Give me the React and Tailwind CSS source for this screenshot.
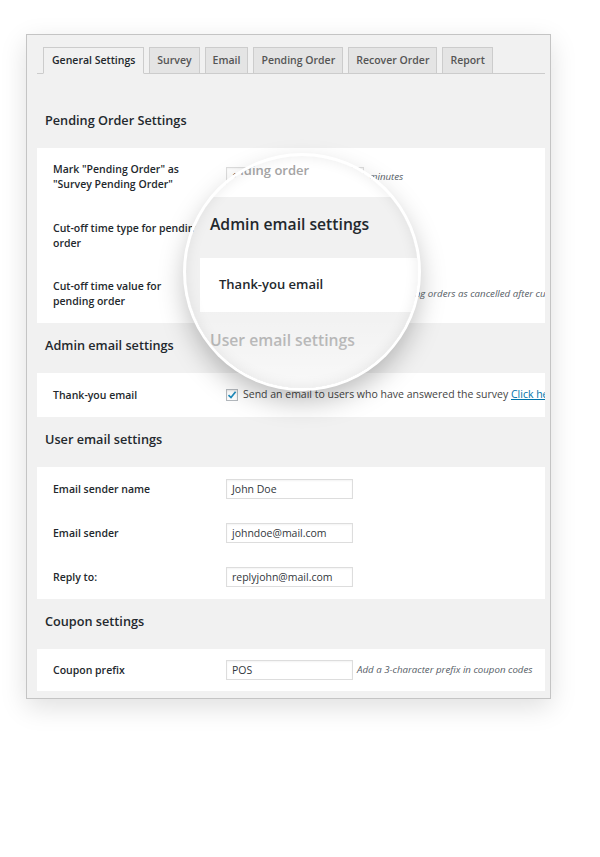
import React from "react";

const FONT = "font-['Open_Sans','Liberation_Sans',sans-serif]";

const tabs = ["General Settings", "Survey", "Email", "Pending Order", "Recover Order", "Report"];

function Heading({ children }) {
  return (
    <div className="h-[50px] pt-[12px] pl-[8px] text-[12.7px] leading-[20px] font-semibold text-[#23282d]">
      {children}
    </div>
  );
}

function Input({ value, w = "w-[127px]" }) {
  return (
    <div
      className={`${w} h-[20px] shrink-0 border border-[#dddddd] bg-white pl-[5px] text-[10.5px] leading-[18px] text-[#32373c] shadow-[inset_0_1px_2px_rgba(0,0,0,0.05)]`}
    >
      {value}
    </div>
  );
}

function Row({ h, label, children }) {
  return (
    <div className={`flex items-center ${h}`}>
      <div className="w-[189px] shrink-0 pl-[16px] text-[10.5px] leading-[15px] font-semibold text-[#23282d] whitespace-nowrap">
        {label}
      </div>
      <div className="flex items-center min-w-0 whitespace-nowrap">{children}</div>
    </div>
  );
}

function Desc({ children, ml = "ml-[4px]" }) {
  return <span className={`${ml} text-[9.7px] italic text-[#555d66]`}>{children}</span>;
}

function Section({ children }) {
  return <div className="bg-white overflow-hidden">{children}</div>;
}

function Check() {
  return (
    <div className="w-[12px] h-[12px] shrink-0 border border-[#b4b9be] bg-white flex items-center justify-center shadow-[inset_0_1px_2px_rgba(0,0,0,0.1)]">
      <svg width="10" height="10" viewBox="0 0 10 10">
        <path d="M1.5 5.2 L4 7.6 L8.6 1.8" fill="none" stroke="#1e8cbe" strokeWidth="1.7" />
      </svg>
    </div>
  );
}

function Magnifier() {
  return (
    <div className="absolute left-[186px] top-[156px] w-[232px] h-[232px] rounded-full overflow-hidden shadow-[0_0_0_3px_#ffffff,0_12px_28px_rgba(0,0,0,0.28)]">
      <div className="flex flex-col h-full">
        <div className="h-[41px] shrink-0 bg-white pl-[34px] pt-[5px] text-[13px] leading-[18px] font-semibold text-[#a4a4a4] whitespace-nowrap">
          pending order
        </div>
        <div className="h-[61px] shrink-0 bg-[#f1f1f1] pl-[24px] pt-[16px] text-[15.7px] leading-[22px] font-semibold text-[#23282d] whitespace-nowrap">
          Admin email settings
        </div>
        <div className="h-[54px] shrink-0 bg-[#f1f1f1] pl-[14px]">
          <div className="h-full bg-white pl-[19px] flex items-center text-[13px] font-semibold text-[#23282d] whitespace-nowrap">
            Thank-you email
          </div>
        </div>
        <div className="flex-1 bg-[#f1f1f1] pl-[24px] pt-[17px] text-[15.7px] leading-[22px] font-semibold text-[#a3a3a3] whitespace-nowrap">
          User email settings
        </div>
      </div>
      <div className="absolute inset-0 rounded-full bg-[linear-gradient(to_bottom,rgba(255,255,255,0)_65%,rgba(255,255,255,0.55)_100%)] shadow-[inset_0_0_14px_rgba(0,0,0,0.08)]" />
    </div>
  );
}

export default function App() {
  return (
    <div className={`relative w-[600px] h-[857px] bg-white ${FONT}`}>
      <div className="pt-[34px] pl-[26px]">
        <div className="w-[525px] h-[665px] border border-[#c4c4c4] bg-[#f1f1f1] shadow-[0_8px_25px_rgba(0,0,0,0.13)] pt-[12px] pl-[10px] pr-[5px]">
          <div className="flex gap-[5px] pl-[6px] h-[27px] border-b border-[#cccccc]">
            {tabs.map((t, i) => (
              <div
                key={t}
                className={
                  i === 0
                    ? "h-[27px] px-[8px] flex items-center border border-[#cccccc] border-b-[#f1f1f1] bg-[#f1f1f1] text-[10.5px] font-semibold text-[#23282d] whitespace-nowrap"
                    : "h-[27px] px-[7px] flex items-center border border-[#cccccc] bg-[#e4e4e4] text-[10.5px] font-semibold text-[#555555] whitespace-nowrap"
                }
              >
                {t}
              </div>
            ))}
          </div>

          <div className="mt-[24px]">
            <Heading>Pending Order Settings</Heading>
            <Section>
              <Row
                h="h-[58px]"
                label={
                  <>
                    Mark "Pending Order" as
                    <br />
                    "Survey Pending Order"
                  </>
                }
              >
                <Input value="1" w="w-[138px]" />
                <Desc ml="ml-[5px]">minutes</Desc>
              </Row>
              <Row
                h="h-[59px]"
                label={
                  <>
                    Cut-off time type for pending
                    <br />
                    order
                  </>
                }
              >
                <div className="w-[140px] h-[22px] border border-[#dddddd] bg-white pl-[5px] text-[10.5px] leading-[20px] text-[#32373c]">
                  Minutes
                </div>
              </Row>
              <Row
                h="h-[58px]"
                label={
                  <>
                    Cut-off time value for
                    <br />
                    pending order
                  </>
                }
              >
                <Input value="60" w="w-[136px]" />
                <Desc>Mark pending orders as cancelled after cut-off time</Desc>
              </Row>
            </Section>

            <Heading>Admin email settings</Heading>
            <Section>
              <Row h="h-[44px]" label="Thank-you email">
                <Check />
                <span className="ml-[5px] text-[10.5px] text-[#444444]">
                  Send an email to users who have answered the survey{" "}
                  <span className="text-[#0073aa] underline">Click here</span>
                </span>
              </Row>
            </Section>

            <Heading>User email settings</Heading>
            <Section>
              <Row h="h-[44px]" label="Email sender name">
                <Input value="John Doe" />
              </Row>
              <Row h="h-[44px]" label="Email sender">
                <Input value="johndoe@mail.com" />
              </Row>
              <Row h="h-[44px]" label="Reply to:">
                <Input value="replyjohn@mail.com" />
              </Row>
            </Section>

            <Heading>Coupon settings</Heading>
            <Section>
              <Row h="h-[42px]" label="Coupon prefix">
                <Input value="POS" />
                <Desc>Add a 3-character prefix in coupon codes</Desc>
              </Row>
            </Section>
          </div>
        </div>
      </div>
      <Magnifier />
    </div>
  );
}
